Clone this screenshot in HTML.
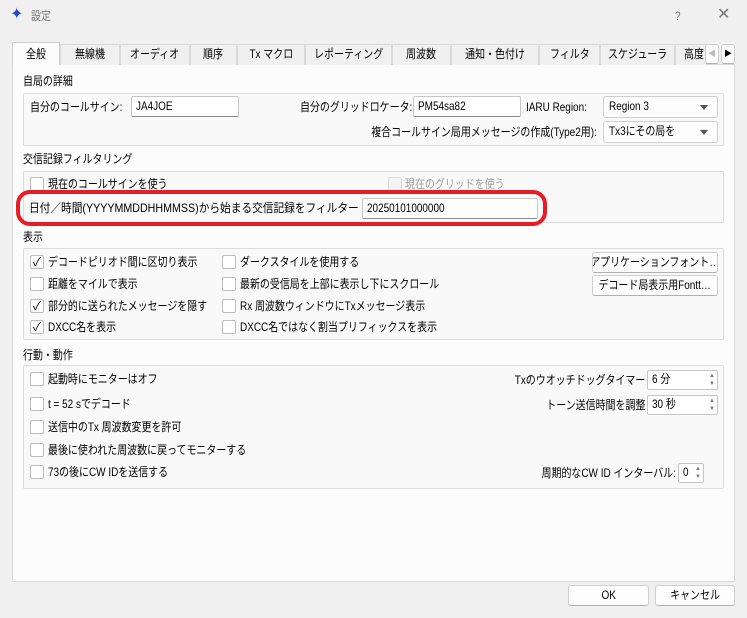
<!DOCTYPE html>
<html><head><meta charset="utf-8"><style>
*{box-sizing:border-box;margin:0;padding:0}
body{width:747px;height:618px;background:#f0f0f0;font-family:"Liberation Sans","Noto Sans CJK JP",sans-serif;font-size:12px;color:#000;position:relative;overflow:hidden}
.a{position:absolute;white-space:nowrap}
.t{position:absolute;white-space:nowrap;line-height:14px;transform:scaleX(.83);transform-origin:0 0}
.r{transform-origin:100% 0}
.s{display:inline-block;transform:scaleX(.83);transform-origin:0 0;white-space:nowrap}
.c{display:inline-block;transform:scaleX(.83);transform-origin:50% 0;white-space:nowrap;margin:0 -40px}
.tab{position:absolute;top:44px;height:21px;border:1px solid #d9d9d9;border-bottom:none;background:#f0f0f0;text-align:center;line-height:19px;font-size:12px;overflow:hidden}
.pane{position:absolute;left:12px;top:64px;width:723px;height:518px;background:#fcfcfc;border:1px solid #d9d9d9}
.grp{position:absolute;border:1px solid #dcdcdc;background:#f9f9f9;border-radius:2px}
.in{position:absolute;background:#fff;border:1px solid #c6c6c6;border-bottom:1px solid #888;border-radius:2px;padding-left:4px;line-height:19px;overflow:hidden}
.cb{position:absolute;width:14px;height:14px;border:1px solid #bdbdbd;background:#fff;border-radius:2px;font-size:12px;line-height:12px;text-align:center}
.btn{position:absolute;background:#fdfdfd;border:1px solid #cfcfcf;border-bottom-color:#b0b0b0;border-radius:3px;text-align:center;line-height:18px;overflow:hidden;white-space:nowrap}
.combo{position:absolute;background:#fdfdfd;border:1px solid #cfcfcf;border-radius:3px;padding-left:5px;line-height:19px}
.combo:after{content:"";position:absolute;right:9px;top:8px;border-left:4px solid transparent;border-right:4px solid transparent;border-top:5px solid #555}
.spin{position:absolute;background:#fff;border:1px solid #c6c6c6;border-radius:2px;padding-left:4px;line-height:17px}
.spin:after{content:"▲\A▼";white-space:pre;position:absolute;right:2px;top:1px;font-size:6px;line-height:8px;color:#777}
</style></head><body>
<div class="a" style="left:10px;top:7px;color:#2a3fd8;font-size:16px;line-height:16px">✦</div>
<div class="t" style="left:31px;top:9px;color:#777">設定</div>
<div class="t" style="left:675px;top:9px;color:#777">?</div>
<div class="a" style="left:717px;top:6px;color:#777;font-size:16px;line-height:18px">✕</div>

<div class="pane"></div>
<div class="tab" style="left:12px;width:48px;top:42px;height:23px;background:#fcfcfc;border-color:#d0d0d0;line-height:22px"><span class="c">全般</span></div>
<div class="tab" style="left:60px;width:60px"><span class="c">無線機</span></div>
<div class="tab" style="left:120px;width:70px"><span class="c">オーディオ</span></div>
<div class="tab" style="left:190px;width:47px"><span class="c">順序</span></div>
<div class="tab" style="left:237px;width:68px"><span class="c">Tx マクロ</span></div>
<div class="tab" style="left:305px;width:87px"><span class="c">レポーティング</span></div>
<div class="tab" style="left:392px;width:59px"><span class="c">周波数</span></div>
<div class="tab" style="left:451px;width:88px"><span class="c">通知・色付け</span></div>
<div class="tab" style="left:539px;width:61px"><span class="c">フィルタ</span></div>
<div class="tab" style="left:600px;width:75px"><span class="c">スケジューラ</span></div>
<div class="tab" style="left:675px;width:32px;text-align:left;padding-left:8px"><span class="s">高度</span></div>
<div class="btn" style="left:705px;top:44px;width:14px;height:20px;color:#bbb;font-size:8px;line-height:18px">◀</div>
<div class="btn" style="left:721px;top:44px;width:14px;height:20px;font-size:8px;line-height:18px">▶</div>

<div class="t" style="left:23px;top:74px">自局の詳細</div>
<div class="grp" style="left:23px;top:93px;width:701px;height:53px"></div>
<div class="t" style="left:30px;top:100px">自分のコールサイン:</div>
<div class="in" style="left:131px;top:96px;width:108px;height:21px"><span class="s">JA4JOE</span></div>
<div class="t" style="left:300px;top:100px">自分のグリッドロケータ:</div>
<div class="in" style="left:413px;top:96px;width:108px;height:21px"><span class="s">PM54sa82</span></div>
<div class="t" style="left:526px;top:100px">IARU Region:</div>
<div class="combo" style="left:603px;top:96px;width:115px;height:22px"><span class="s">Region 3</span></div>
<div class="t r" style="right:150px;top:125px">複合コールサイン局用メッセージの作成(Type2用):</div>
<div class="combo" style="left:603px;top:121px;width:115px;height:22px"><span class="s">Tx3にその局を</span></div>

<div class="t" style="left:23px;top:152px">交信記録フィルタリング</div>
<div class="grp" style="left:23px;top:171px;width:701px;height:52px"></div>
<div class="cb" style="left:30px;top:177px"></div>
<div class="t" style="left:48px;top:177px">現在のコールサインを使う</div>
<div class="cb" style="left:388px;top:177px;background:#f3f3f3;border-color:#ddd"></div>
<div class="t" style="left:405px;top:177px;color:#a0a0a0">現在のグリッドを使う</div>
<div class="t" style="left:29px;top:201px;transform:scaleX(.89)">日付／時間(YYYYMMDDHHMMSS)から始まる交信記録をフィルター</div>
<div class="in" style="left:362px;top:198px;width:176px;height:21px"><span class="s">20250101000000</span></div>
<div class="a" style="left:16px;top:190px;width:531px;height:36px;border:4px solid #e81c24;border-radius:14px"></div>

<div class="t" style="left:23px;top:230px">表示</div>
<div class="grp" style="left:23px;top:248px;width:701px;height:92px"></div>
<div class="cb" style="left:30px;top:255px">✓</div><div class="t" style="left:48px;top:255px">デコードピリオド間に区切り表示</div>
<div class="cb" style="left:30px;top:277px"></div><div class="t" style="left:48px;top:277px">距離をマイルで表示</div>
<div class="cb" style="left:30px;top:299px">✓</div><div class="t" style="left:48px;top:299px">部分的に送られたメッセージを隠す</div>
<div class="cb" style="left:30px;top:320px">✓</div><div class="t" style="left:48px;top:320px">DXCC名を表示</div>
<div class="cb" style="left:222px;top:255px"></div><div class="t" style="left:240px;top:255px">ダークスタイルを使用する</div>
<div class="cb" style="left:222px;top:277px"></div><div class="t" style="left:240px;top:277px">最新の受信局を上部に表示し下にスクロール</div>
<div class="cb" style="left:222px;top:299px"></div><div class="t" style="left:240px;top:299px">Rx 周波数ウィンドウにTxメッセージ表示</div>
<div class="cb" style="left:222px;top:320px"></div><div class="t" style="left:240px;top:320px">DXCC名ではなく割当プリフィックスを表示</div>
<div class="btn" style="left:592px;top:252px;width:126px;height:21px"><span class="c">アプリケーションフォント…</span></div>
<div class="btn" style="left:592px;top:275px;width:126px;height:21px"><span class="c">デコード局表示用Fontt…</span></div>

<div class="t" style="left:23px;top:348px">行動・動作</div>
<div class="grp" style="left:23px;top:365px;width:701px;height:124px"></div>
<div class="cb" style="left:30px;top:372px"></div><div class="t" style="left:48px;top:372px">起動時にモニターはオフ</div>
<div class="cb" style="left:30px;top:397px"></div><div class="t" style="left:48px;top:397px">t = 52 sでデコード</div>
<div class="cb" style="left:30px;top:420px"></div><div class="t" style="left:48px;top:420px">送信中のTx 周波数変更を許可</div>
<div class="cb" style="left:30px;top:443px"></div><div class="t" style="left:48px;top:443px">最後に使われた周波数に戻ってモニターする</div>
<div class="cb" style="left:30px;top:465px"></div><div class="t" style="left:48px;top:465px">73の後にCW IDを送信する</div>
<div class="t r" style="right:102px;top:373px">Txのウオッチドッグタイマー</div>
<div class="spin" style="left:647px;top:370px;width:71px;height:20px"><span class="s">6 分</span></div>
<div class="t r" style="right:102px;top:398px">トーン送信時間を調整</div>
<div class="spin" style="left:647px;top:395px;width:71px;height:20px"><span class="s">30 秒</span></div>
<div class="t r" style="right:71px;top:466px">周期的なCW ID インターバル:</div>
<div class="spin" style="left:678px;top:463px;width:26px;height:20px"><span class="s">0</span></div>

<div class="btn" style="left:568px;top:585px;width:81px;height:21px"><span class="c">OK</span></div>
<div class="btn" style="left:655px;top:585px;width:80px;height:21px"><span class="c">キャンセル</span></div>
</body></html>
